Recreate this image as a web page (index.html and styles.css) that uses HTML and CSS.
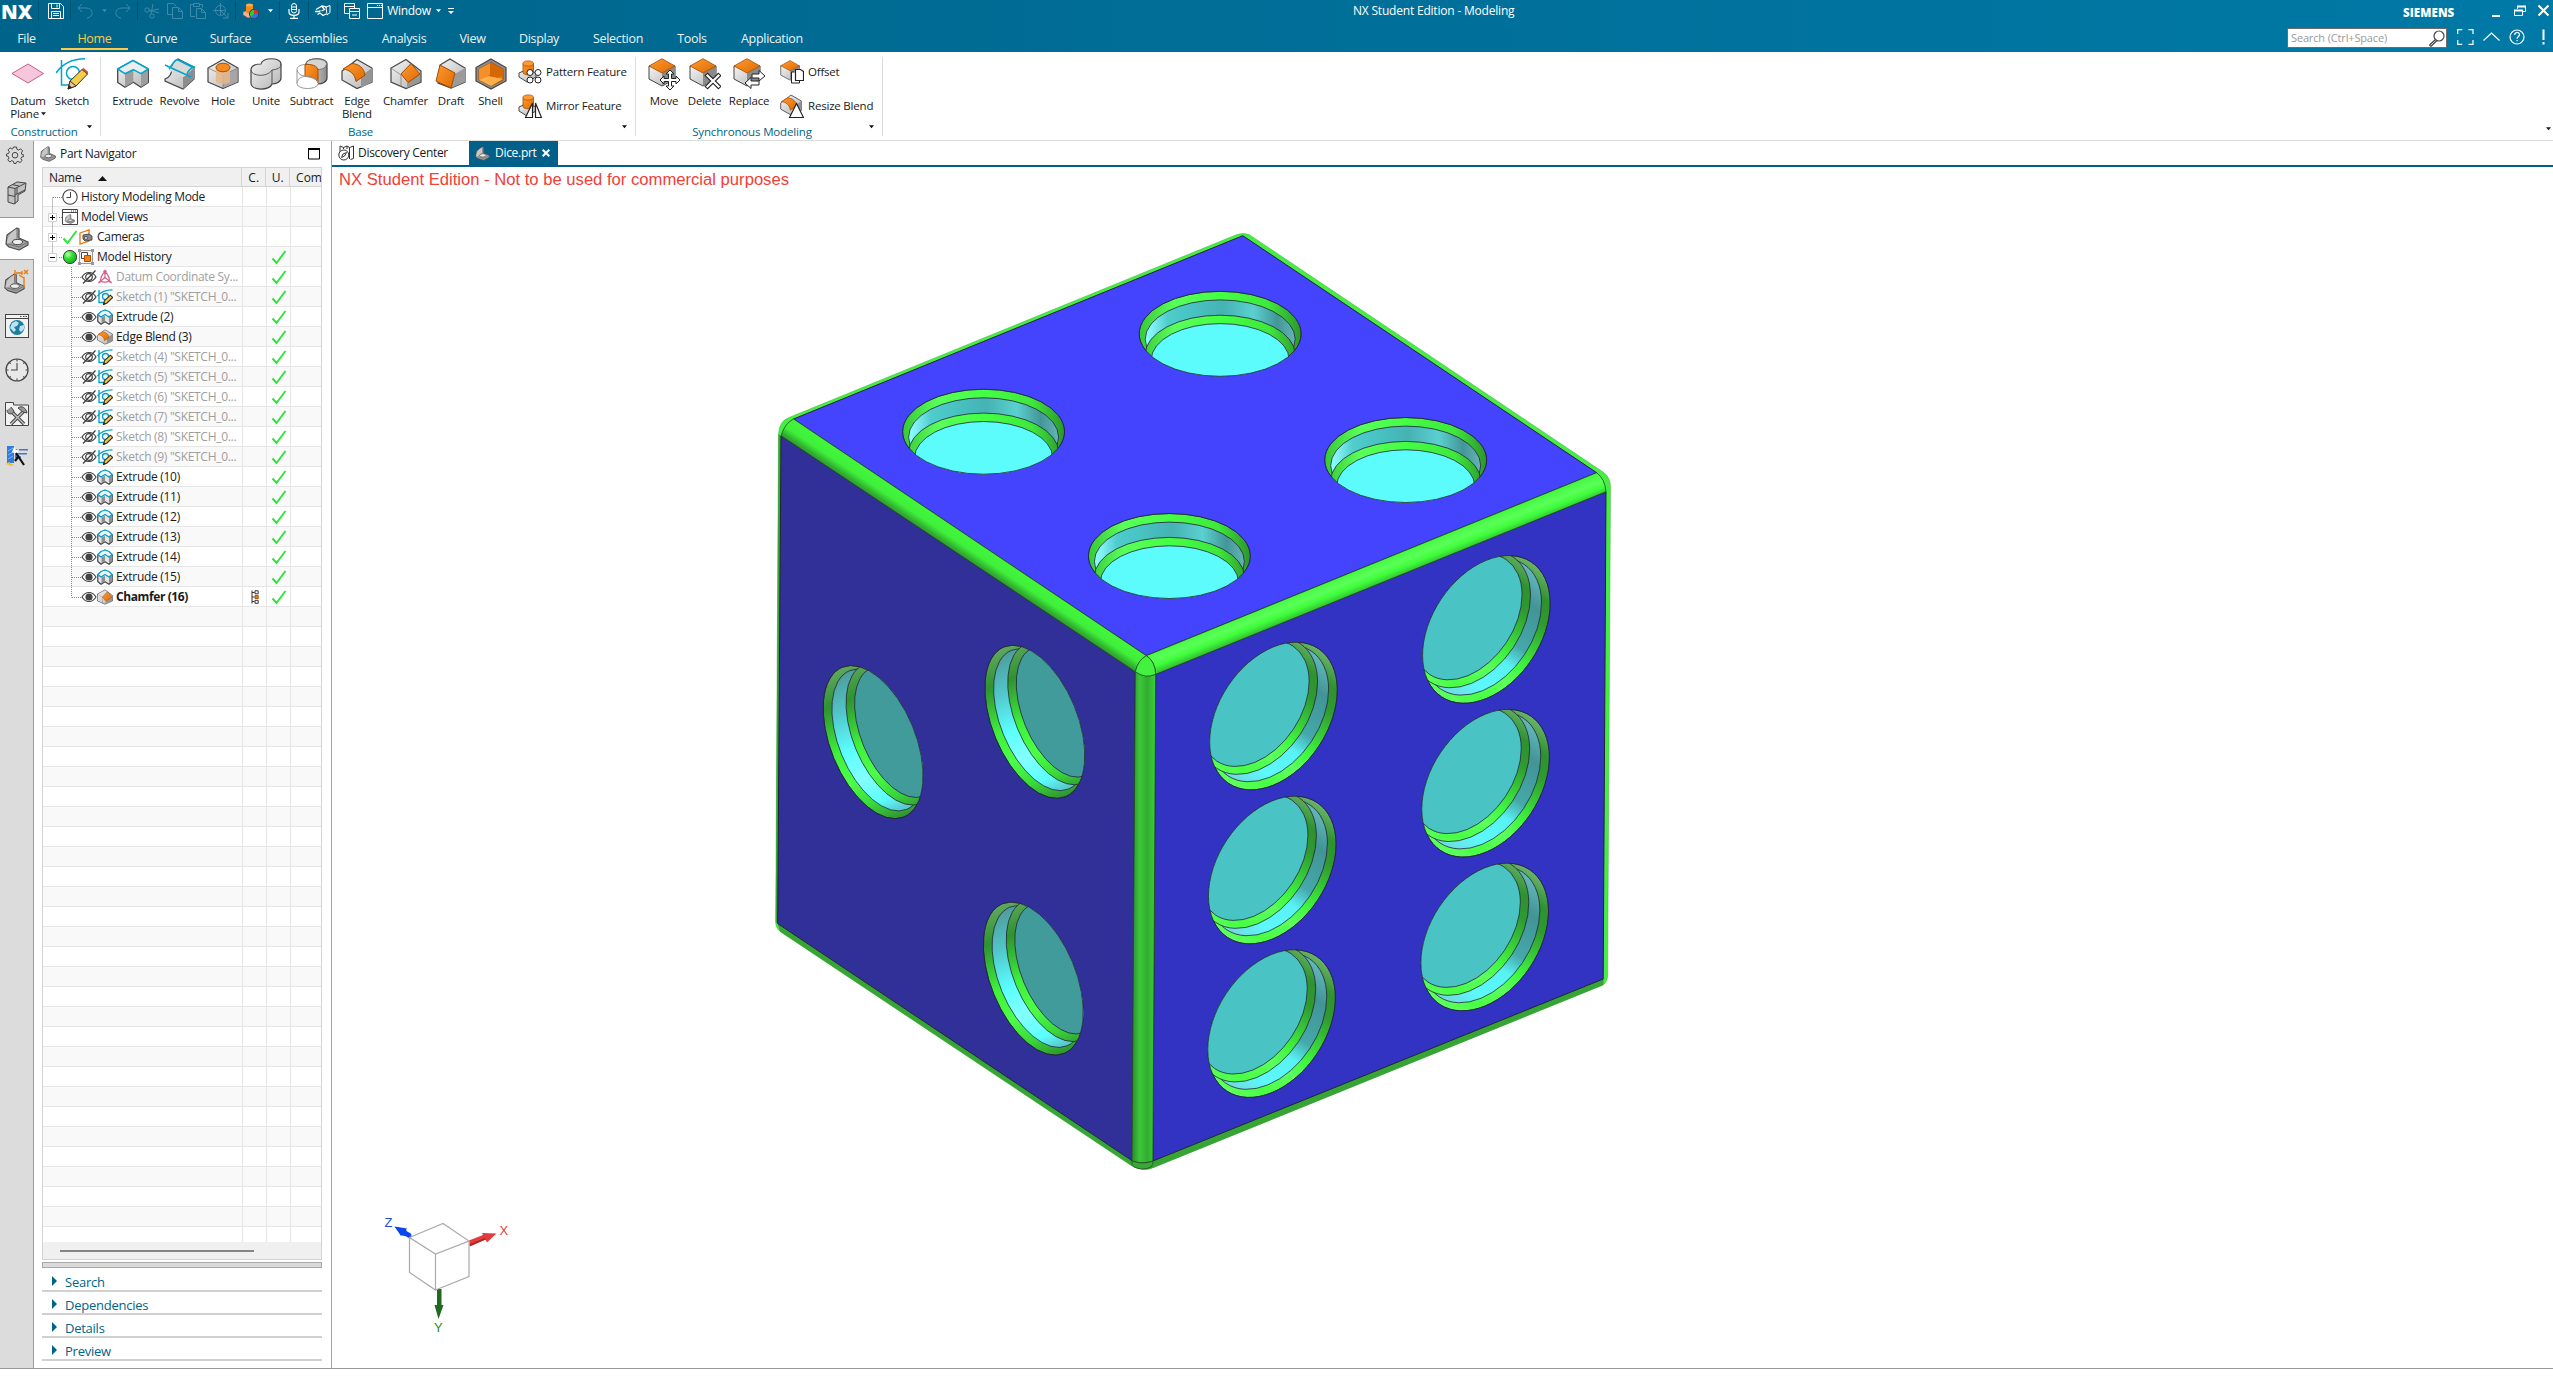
FILE: index.html
```html
<!DOCTYPE html>
<html lang="en">
<head>
<meta charset="utf-8">
<title>NX Student Edition - Modeling</title>
<link rel="stylesheet" href="styles.css">
</head>
<body>
<svg class="defs" width="0" height="0" aria-hidden="true">
  <defs>
    <linearGradient id="gGrey" x1="0" y1="0" x2="1" y2="1"><stop offset="0" stop-color="#f4f4f4"/><stop offset="1" stop-color="#b4b4b4"/></linearGradient>
    <linearGradient id="gDark" x1="0" y1="0" x2="1" y2="0"><stop offset="0" stop-color="#e6e6e6"/><stop offset="1" stop-color="#8c8c8c"/></linearGradient>
    <linearGradient id="gOr" x1="0" y1="0" x2="1" y2="1"><stop offset="0" stop-color="#ff9a30"/><stop offset="1" stop-color="#df6a00"/></linearGradient>
    <radialGradient id="gBall" cx=".35" cy=".3" r=".8"><stop offset="0" stop-color="#b8ffb0"/><stop offset=".4" stop-color="#35e235"/><stop offset="1" stop-color="#0fa01a"/></radialGradient>
    <symbol id="cube" viewBox="0 0 32 32"><path d="M16 1.500L31 10v14L16 30.500 1 24V10z" fill="url(#gGrey)" stroke="#444" stroke-width="1.200" stroke-linejoin="round"/><path d="M16 17v13l14.500-6V10z" fill="#a6a6a6"/><path d="M1 10l15 7 15-7M16 17v13" fill="none" stroke="#777" stroke-width=".7"/></symbol>
    <symbol id="extrude" viewBox="0 0 32 32"><path d="M.7 11v13.500L8 29.300l8.300-5 7.700 5 7.300-4.800V11L16 2.500z" fill="url(#gGrey)" stroke="#444" stroke-width="1.300" stroke-linejoin="round"/><path d="M8 16v13l8.300-5V12zM24 16v13l7-4.500V11z" fill="#9d9d9d"/><path d="M.7 11L16 2.500 31.300 11 24 15.700l-7.700-4-8.300 4z" fill="#ededed" stroke="#00a5cc" stroke-width="1.500" stroke-linejoin="round"/></symbol>
    <symbol id="extrude-s" viewBox="0 0 16 16"><path d="M.8 6v6.500L4 15.300l4-2.500 4 2.500 3.200-2.800V6L8 1.200z" fill="#e4e4e4" stroke="#444" stroke-width="1.200" stroke-linejoin="round"/><path d="M4.500 8.500v6L8 12V7zM12 8.500v6l2.700-2V6z" fill="#8f8f8f"/><path d="M.8 5.500l3.200-3L8 1l4 1.500 3.200 3L12 8 8 5.500 4 8z" fill="#f2f2f2" stroke="#00a0c8" stroke-width="1.300" stroke-linejoin="round"/></symbol>
    <symbol id="sketch" viewBox="0 0 32 32"><g fill="none" stroke="#00a5cc" stroke-width="1.500"><path d="M5.500 2v25h14M0 15C7 5 16 1 29 .8"/><circle cx="17" cy="15" r="6.500"/></g><path d="M12 31l2-8L26 11.500l5.500 4.500L20 28z" fill="#f5cd46" stroke="#333"/><path d="M26 11.500l1.500-1.300 5 4.500-1 1.300z" fill="#e04848" stroke="#a33" stroke-width=".6"/><path d="M12 31l2-8 6 5z" fill="#e9c79a" stroke="#333"/><path d="M12 31l1-4 3 2.400z" fill="#222"/></symbol>
    <symbol id="sketch-s" viewBox="0 0 16 16"><g fill="none" stroke="#00a0c8" stroke-width="1.300"><path d="M2 1v12.500h5M.5 7C4 2.500 9 .8 15.500.8"/><circle cx="8.500" cy="7.500" r="3"/></g><path d="M6.500 15.500l1-3.800 5.800-5.500 2.400 2.200-5.700 5.600z" fill="#f5c746" stroke="#2a2a2a" stroke-width="1.100"/><path d="M6.200 15.800l.7-2.600 2 1.800z" fill="#222"/></symbol>
    <symbol id="edgeblend" viewBox="0 0 32 32"><path d="M16 1.500L31 10v14L16 30.500 1 22v-9z" fill="url(#gGrey)" stroke="#444" stroke-width="1.200"/><path d="M20 30V18l11-8v14z" fill="#949494"/><path d="M5 9l9-5.500C21 4 26 8 27 15l-9 6.500C17 14 12 10 5 9z" transform="translate(-3 2)" fill="url(#gOr)" stroke="#a24b00"/></symbol>
    <symbol id="chamfer" viewBox="0 0 32 32"><path d="M16 1.500L31 13v11L16 30.500 1 24V10z" fill="url(#gGrey)" stroke="#444" stroke-width="1.200"/><path d="M17 25l13-9v8l-13 6z" fill="#979797"/><path d="M1 10l10 7v12" fill="none" stroke="#777" stroke-width=".7"/><path d="M21 5.500L30 16 18 24.500 11 16z" fill="url(#gOr)" stroke="#a24b00"/></symbol>
    <symbol id="offcube" viewBox="0 0 32 32"><path d="M1 8v13l13 7 13-7V8z" fill="url(#gGrey)" stroke="#444"/><path d="M14 15v12.500L26.500 21V8z" fill="#8a8a8a"/><path d="M14 .7L27 8l-13 7L1 8z" fill="url(#gOr)" stroke="#a24b00" stroke-width=".8"/></symbol>
    <symbol id="cylbase" viewBox="0 0 24 24"><path d="M1 13l9-4 8 4v4l-9 5-8-5z" fill="url(#gGrey)" stroke="#444"/><path d="M5 3.500v9c0 3 10.500 3 10.500 0v-9z" fill="url(#gOr)" stroke="#a24b00" stroke-width=".8"/><ellipse cx="10.200" cy="3.500" rx="5.200" ry="2.600" fill="#ff9a30" stroke="#a24b00" stroke-width=".7"/></symbol>
    <symbol id="part" viewBox="0 0 24 24"><path d="M1 17L2 8 12 1l2 1v9l9 4v3l-9 5-10-3z" fill="#a2a2a2" stroke="#4b4b4b" stroke-width="1.200" stroke-linejoin="round"/><path d="M2 15C3 8 7 4 12 2v9l-9 6z" fill="#c8c8c8"/><path d="M12 11v-9M23 15l-9 5-11-3" fill="none" stroke="#666" stroke-width=".8"/><ellipse cx="12.500" cy="15" rx="5" ry="2.600" fill="#eee" stroke="#444"/></symbol>
    <symbol id="eye" viewBox="0 0 16 16"><path d="M1 8c3.500-6 10.500-6 14 0-3.500 6-10.500 6-14 0z" fill="#fff" stroke="#444" stroke-width="1.100"/><circle cx="8" cy="8" r="3.600" fill="#444"/></symbol>
    <symbol id="noeye" viewBox="0 0 16 16"><g fill="none" stroke="#3c3c3c" stroke-width="1.200"><path d="M1 8c3.500-6 10.500-6 14 0-3.500 6-10.500 6-14 0zM14.500 1.500L2 14.500"/><circle cx="8" cy="8" r="3.300"/></g></symbol>
    <symbol id="check" viewBox="0 0 16 16"><path d="M1.500 9.500l4 4.500L14.500 2" fill="none" stroke="#2ee63a" stroke-width="2"/></symbol>
    <symbol id="clock" viewBox="0 0 24 24"><circle cx="12" cy="12" r="11" fill="#fff" fill-opacity=".35" stroke="#444" stroke-width="1.200"/><path d="M12 5v7H6M12 1v2.500M12 20.500V23M1 12h2.500M20.500 12H23M4.500 4.500l1.200 1.200M19.500 4.500l-1.200 1.200M4.500 19.500l1.200-1.200M19.500 19.500l-1.200-1.200" fill="none" stroke="#444" stroke-width="1.100"/></symbol>
    <symbol id="clock-s" viewBox="0 0 16 16"><circle cx="8" cy="8" r="7.200" fill="#fff" stroke="#444" stroke-width="1.100"/><path d="M8.500 3v5.500H4.500" fill="none" stroke="#444"/></symbol>
    <symbol id="datum" viewBox="0 0 16 16"><g fill="none" stroke="#d8608c" stroke-width="1.200"><path d="M8 2v6.500M8 8.500L2.500 13M8 8.500l5.500 4.500M8 2.500c-3 3-4.500 6-4.500 9.500 3 1.500 6 1.500 9 0 0-3.500-1.500-6.500-4.500-9.500z"/></g><circle cx="8" cy="2.300" r="1.600" fill="#d8608c"/><path d="M1 14.500l1-3 2 2zM15 14.500l-1-3-2 2z" fill="#d8608c"/></symbol>
    <symbol id="caret" viewBox="0 0 6 4"><path d="M0 0h6L3 3.500z" fill="currentColor"/></symbol>
  </defs>
</svg>

<div class="app">
  <header class="top">
    <div class="titlebar">
      <div class="quick">
        <span class="nx">NX</span>
        <span class="q q-save sep"><svg width="16" height="16" viewBox="0 0 16 16"><path d="M.5.500h12l3 3v12H.5zM3.500.500v5h8v-5M9 1.500v3M3.500 15.500v-7h9v7M5 10.500h6M5 12.500h6" fill="none" stroke="#fff"/></svg></span>
        <span class="q q-undo sep dim"><svg width="16" height="16" viewBox="0 0 16 16"><path d="M5 1L1 5l4 4M1 5h8c8 0 8 9 1 10" fill="none" stroke="currentColor"/></svg></span>
        <span class="q q-c1 dim"><svg width="5" height="4"><use href="#caret"/></svg></span>
        <span class="q q-redo dim"><svg width="16" height="16" viewBox="0 0 16 16"><path d="M11 1l4 4-4 4M15 5H7C-1 5-1 14 6 15" fill="none" stroke="currentColor"/></svg></span>
        <span class="q q-cut sep dim"><svg width="16" height="16" viewBox="0 0 16 16"><g fill="none" stroke="currentColor"><circle cx="3" cy="7" r="2.200"/><circle cx="8" cy="13" r="2.200"/><path d="M5 8l10-2M7 11L9 1M5 7l10 3"/></g></svg></span>
        <span class="q q-copy dim"><svg width="16" height="16" viewBox="0 0 16 16"><path d="M5 11.500H.5v-11h6l3 3M5.500 4.500h6l4 4v7h-10zM11.500 4.500v4h4" fill="none" stroke="currentColor"/></svg></span>
        <span class="q q-paste dim"><svg width="16" height="16" viewBox="0 0 16 16"><path d="M5 13.500H.5v-12h3m6 0h3v3M3.500.500h6v3h-6zM6.500 5.500h5l4 4v6h-9zM11.500 5.500v4h4" fill="none" stroke="currentColor"/></svg></span>
        <span class="q q-target dim"><svg width="16" height="16" viewBox="0 0 16 16"><circle cx="7.500" cy="7.500" r="5" fill="none" stroke="currentColor"/><path d="M7.500 0v12M0 7.500h12M8 8l7 7m0-5v5h-5" fill="none" stroke="currentColor"/></svg></span>
        <span class="q q-color sep"><svg width="16" height="16" viewBox="0 0 16 16"><path d="M0 9l5-2 6 2-1 5-5 1-5-3z" fill="#f0b0a0" stroke="#a33" stroke-width=".6"/><path d="M3 2v7c0 2 7 2 7 0V2z" fill="#f38a1c"/><ellipse cx="6.500" cy="2" rx="3.500" ry="1.600" fill="#ffab4a"/><circle cx="11" cy="11" r="4.600" fill="#2ad02a" stroke="#333"/><path d="M11 11V6.500A4.500 4.500 0 0 1 15.500 11z" fill="#e82c2c"/><path d="M11 11h4.500A4.500 4.500 0 0 1 8 14.200z" fill="#2c74e8"/></svg></span>
        <span class="q q-c2"><svg width="5" height="4"><use href="#caret"/></svg></span>
        <span class="q q-mic sep"><svg width="12" height="16" viewBox="0 0 12 16"><rect x="3.500" y=".5" width="5" height="9.500" rx="2.500" fill="none" stroke="#fff"/><path d="M4 4h4M4 6.500h4M1 6v3c0 4.500 10 4.500 10 0V6M6 12.500V15M2 15.300h8" fill="none" stroke="#fff" stroke-width="1.200"/></svg></span>
        <span class="q q-hand sep"><svg width="16" height="12" viewBox="0 0 16 12"><path d="M1 4.500L7 1l3 .5 1.500 1M7 1.500l2.500 3-3 1.500M0 6.500h4l1.500-1M2.500 9.500L5 8l3 2.500 3-1.500" fill="none" stroke="#fff" stroke-width="1.300"/><path d="M11 2l4-1.500v7L12 10z" fill="none" stroke="#fff"/></svg></span>
        <span class="q q-wins sep"><svg width="16" height="16" viewBox="0 0 16 16"><path d="M5 10.500H.5V.500h10V5M.5 3.500h10M5.500 5.500h10v10h-10zM5.500 8.500h10M8 12h5" fill="none" stroke="#fff"/></svg></span>
        <span class="q q-win"><svg width="16" height="16" viewBox="0 0 16 16"><path d="M.5.500h15v15H.5zM.5 4.500h15M10 2.500h1m1 0h1m1 0h1" fill="none" stroke="#fff"/></svg></span>
        <span class="q q-text">Window</span>
        <span class="q q-c3"><svg width="5" height="4"><use href="#caret"/></svg></span>
        <span class="q q-more"><svg width="6" height="7" viewBox="0 0 6 7"><path d="M0 .500h6" stroke="#fff"/><path d="M0 3h6L3 6z" fill="#fff"/></svg></span>
      </div>
      <h1 class="title">NX Student Edition - Modeling</h1>
      <div class="winctl">
        <span class="brand">SIEMENS</span>
        <svg width="60" height="14" viewBox="0 0 60 14"><g fill="none" stroke="#fff"><path d="M1 12h8" stroke-width="2"/><path d="M26.500 5V2.500h8v5H32M23.500 6.500h8v5h-8z"/><path d="M23 6.500h9M26 2.500h9" stroke-width="2"/><path d="M47.500 1.500l10 10m0-10l-10 10" stroke-width="2"/></g></svg>
      </div>
    </div>
    <div class="menubar">
      <nav class="tabs">
        <a class="tab t-file">File</a><a class="tab t-home active">Home</a><a class="tab t-curve">Curve</a><a class="tab t-surface">Surface</a><a class="tab t-asm">Assemblies</a><a class="tab t-ana">Analysis</a><a class="tab t-view">View</a><a class="tab t-disp">Display</a><a class="tab t-sel">Selection</a><a class="tab t-tools">Tools</a><a class="tab t-app">Application</a>
      </nav>
      <div class="tools">
        <div class="search"><span>Search (Ctrl+Space)</span><svg width="17" height="17" viewBox="0 0 17 17"><circle cx="11" cy="6" r="5" fill="#fff" stroke="#444" stroke-width="1.200"/><path d="M7.500 9.500l-6 5.500M9 10.500L3 16.200l-1.700-1" fill="none" stroke="#444" stroke-width="1.200"/></svg></div>
        <svg width="90" height="18" viewBox="0 0 90 18"><g fill="none" stroke="#fff" stroke-width="1.200"><path d="M.7 6V1.700h4.500M11.500 1.700H16V6M16 12v4.300h-4.500M5.200 16.300H.7V12"/><path d="M26.500 12.500L34.500 5l8 7.500"/><circle cx="60" cy="9" r="7"/><path d="M57.700 7c0-3.300 4.800-3.300 4.800-.3 0 1.800-2.400 1.800-2.400 4M60.100 12v1.300"/><path d="M86.500 1.500v10.500M86.500 14v2.500" stroke-width="2"/></g></svg>
      </div>
    </div>
  </header>

  <section class="ribbon">
    <div class="group g1">
      <div class="items">
        <div class="big w44"><svg width="32" height="32" viewBox="0 0 32 32"><path d="M0 15.500L16 6l15.500 9.500L16 25z" fill="#f5c6dc" stroke="#c75d8b"/></svg><span>Datum<br>Plane <svg class="car" width="5" height="4"><use href="#caret"/></svg></span></div>
        <div class="big w44"><svg width="32" height="32"><use href="#sketch"/></svg><span>Sketch</span></div>
      </div>
      <div class="gname"><span>Construction</span><svg class="dd" width="5" height="4"><use href="#caret"/></svg></div>
    </div>
    <div class="group g2">
      <div class="items">
        <div class="big w47"><svg width="32" height="32"><use href="#extrude"/></svg><span>Extrude</span></div>
        <div class="big w47"><svg width="32" height="32" viewBox="0 0 32 32"><path d="M1 21c5-2 7-5 7-13l6-7 16 8v12L19 31 1 23z" fill="url(#gGrey)" stroke="#444" stroke-width="1.200"/><path d="M19 19c3-1 6-5 11-9v11L19 31z" fill="#8e8e8e"/><path d="M13 1.500L30 9c-5 3-4 7-11 10L4 12c4-1 5-7 9-10.500z" fill="#d9d9d9"/><path d="M13 1.500L30 9c-4 1.500-6 4-7 7M13 1.500C9 3 8 8 5 11M1 7l26 12M13 1.500l15 7.500" fill="none" stroke="#00a5cc" stroke-width="1.500"/></svg><span>Revolve</span></div>
        <div class="big w40"><svg width="32" height="32"><use href="#cube"/><path d="M9 9v14c0 4 14 4 14 0V9z" fill="#e8b689" fill-opacity=".85"/><ellipse cx="16" cy="9.500" rx="7" ry="4.300" fill="#f58a1f" stroke="#a24b00"/></svg><span>Hole</span></div>
        <div class="big w46"><svg width="32" height="32" viewBox="0 0 32 32"><path d="M1 12c0-5 6-6 10-6 1-7 20-7 20 0v14c0 4-5 6-9 6-2 7-21 7-21-1z" fill="url(#gGrey)" stroke="#444" stroke-width="1.200"/><path d="M1 12c0 6 16 8 21 0 5-.5 9-2 9-6M22 12v14" fill="none" stroke="#555"/></svg><span>Unite</span></div>
        <div class="big w45"><svg width="32" height="32" viewBox="0 0 32 32"><path d="M10 6c1-7 21-7 21 0v14c0 4-5 6-9 6z" fill="url(#gDark)" stroke="#444" stroke-width="1.200"/><path d="M10 5.500c1-6 20-6 20.500 0 0 4-4 6-8.500 6z" fill="#d4d4d4" stroke="#666" stroke-width=".8"/><path d="M1 12v14c1 6 20 6 21 0 0-4-3-7-13-7.500V6.500C3 7 1 9 1 12z" fill="#fff"/><path d="M9 6.500c6-.5 13 1 13 6v12c-3-5-8-6-13-6z" fill="url(#gOr)" stroke="#a24b00"/><path d="M9 6.500C3 7 1 9 1 12v14c1 6 20 6 21 0M1 12c2 6 6 5.500 8 6M1 25c1-5 5-6.500 8-6.500 6 0 12 2 13 6" fill="none" stroke="#999"/></svg><span>Subtract</span></div>
        <div class="big w46"><svg width="32" height="32"><use href="#edgeblend"/></svg><span>Edge<br>Blend</span></div>
        <div class="big w51"><svg width="32" height="32"><use href="#chamfer"/></svg><span>Chamfer</span></div>
        <div class="big w40"><svg width="32" height="32" viewBox="0 0 32 32"><path d="M15 1l15 9v14l-14 6L3 25 5 7z" fill="url(#gGrey)" stroke="#444" stroke-width="1.200"/><path d="M20 16l10-6v14l-14 6z" fill="#9b9b9b"/><path d="M5 7l15 8-4 15L1 23z" fill="url(#gOr)" stroke="#a24b00"/></svg><span>Draft</span></div>
        <div class="big w39"><svg width="32" height="32" viewBox="0 0 32 32"><path d="M16 1l15 8.500V23l-15 8L1 23V9.500z" fill="#8d8d8d" stroke="#444" stroke-width="1.200"/><path d="M16 4.500L28 11v11l-12 6-12-6V11z" fill="#ef7d14" stroke="#a24b00"/><path d="M16 4.500L28 11v7c-6 1-7 4-12 5-5-2-4-4-4-10z" fill="#d56705"/><path d="M4 22l9-4 15 3-12 7z" fill="#ffb04a"/><path d="M4 11l11-6v12L4 22z" fill="#f58f28"/></svg><span>Shell</span></div>
        <div class="small">
          <div class="row"><svg width="24" height="24"><use href="#cylbase"/><g fill="#fff" stroke="#222"><circle cx="12" cy="12.500" r="3"/><circle cx="20" cy="12.500" r="3"/><circle cx="12" cy="20" r="3"/><circle cx="20" cy="20" r="3"/></g></svg><span>Pattern Feature</span></div>
          <div class="row"><svg width="24" height="24"><use href="#cylbase"/><path d="M14.500 9v14.500h-7zM17.500 9v14.500h6z" fill="#fff" stroke="#222" stroke-width="1.200"/></svg><span>Mirror Feature</span></div>
        </div>
      </div>
      <div class="gname"><span>Base</span><svg class="dd" width="5" height="4"><use href="#caret"/></svg></div>
    </div>
    <div class="group g3">
      <div class="items">
        <div class="big w44"><svg width="32" height="32"><use href="#offcube"/><path d="M22 12l4 4h-2.500v4.500H28V18l4 4-4 4v-2.500h-4.500V28H26l-4 4-4-4h2.500v-4.500H16V26l-4-4 4-4v2.500h4.500V16H18z" fill="#fff" stroke="#222"/></svg><span>Move</span></div>
        <div class="big w37"><svg width="32" height="32"><use href="#offcube"/><path d="M17 16l14 14m0-14L17 30" stroke="#222" stroke-width="4.500"/><path d="M17.700 16.700l12.600 12.600m0-12.600L17.700 29.300" stroke="#fff" stroke-width="2.200"/></svg><span>Delete</span></div>
        <div class="big w52"><svg width="32" height="32"><use href="#offcube"/><path d="M19 16h7v-3.500l6 5.500-6 5v-3h-7zM26 23h-8v-3.500L12 25l6 5.500V27h8z" fill="#fff" stroke="#222"/></svg><span>Replace</span></div>
        <div class="small">
          <div class="row"><svg width="24" height="24"><svg width="23" height="23" viewBox="0 0 32 32"><use href="#offcube"/></svg><path d="M14 12h-2.500v11h8v-3" fill="#fff" stroke="#222"/><path d="M15.500 9.500h5l3 2v9h-8z" fill="#fff" stroke="#222" stroke-width="1.200"/></svg><span>Offset</span></div>
          <div class="row"><svg width="24" height="24"><svg width="22" height="22" viewBox="0 0 32 32"><use href="#edgeblend"/></svg><path d="M16.500 9.500l7 14h-14z" fill="#fff" stroke="#222" stroke-width="1.200"/></svg><span>Resize Blend</span></div>
        </div>
      </div>
      <div class="gname"><span>Synchronous Modeling</span><svg class="dd" width="5" height="4"><use href="#caret"/></svg></div>
    </div>
    <svg class="ribmore" width="5" height="4"><use href="#caret"/></svg>
  </section>

  <main class="main">
    <aside class="rail">
      <div class="ri r1"><svg width="18" height="18" viewBox="0 0 18 18"><path d="M7.500 1h3l.4 2.300 1.700.8 2-1.300 2 2.100-1.300 2 .7 1.700L18 9l-.2 1.500-2.100.5-.8 1.700 1.200 1.900-2.100 2-1.900-1.200-1.700.7L10 17.500H8l-.6-2.200-1.700-.7L3.800 16l-2-2.100L3 12l-.8-1.700L.5 10V8l2-.5.8-1.700-1.200-2 2-2 1.900 1.300 1-.6z" fill="none" stroke="#444"/><circle cx="9" cy="9.200" r="2.800" fill="none" stroke="#444"/></svg></div>
      <div class="ri r2"><svg width="20" height="24" viewBox="0 0 20 24"><g stroke="#444" fill="#c2c2c2"><path d="M1 6l9-5 9 1-1 8-7 4v6l-4 3-6-2z"/><path d="M1 6l7 1.500V23M8 7.500L18 2.500M8 14l10-5M1 14l7 1.500M10 7v6M5 3.500l7 1.500" fill="none"/></g></svg></div>
      <div class="ri on"><svg width="24" height="24"><use href="#part"/></svg></div>
      <div class="ri r4"><svg width="26" height="26"><svg y="3" width="21" height="23" viewBox="0 0 24 24"><use href="#part"/></svg><path d="M11 1v7M12 4h6M18 2v4M20 1l4 4m0-4l-4 4M20 8v11M15 6l5 3" fill="none" stroke="#e8770c" stroke-width="1.300"/></svg></div>
      <div class="ri"><svg width="24" height="24" viewBox="0 0 24 24"><rect x=".5" y=".5" width="23" height="23" fill="#f2f2f2" stroke="#444"/><path d="M.5 4.500h23M15 2.500h1.500m1.500 0h1.500m1 0H22" stroke="#444"/><circle cx="12" cy="13.500" r="7.500" fill="#1c7ea0"/><path d="M7 9l4-2 3 2-2 3-3 1 2 3-2 2-4-4zM15 12l4-1v4l-3 3-2-2z" fill="#bfe3ee"/></svg></div>
      <div class="ri"><svg width="24" height="24"><use href="#clock"/></svg></div>
      <div class="ri r7"><svg width="24" height="24" viewBox="0 0 24 24"><path d="M.5 3V.500h8V3h15v20.500H.5z" fill="#f2f2f2" stroke="#444"/><path d="M4 7l15 15M20 8L6 22" stroke="#444" stroke-width="3.400"/><path d="M4 7l15 15M18 10L6 22" stroke="#c2c2c2" stroke-width="1.400"/><path d="M2 8c0 5 6 5 7 1L6 5M13 6c4-3 8 0 9 5l-4-1z" fill="#999" stroke="#444"/></svg></div>
      <div class="ri r8"><svg width="24" height="24" viewBox="0 0 24 24"><path d="M2 1h7v17H2z" fill="#2f7be0"/><path d="M3 6l5-3M3 10l5-3M3 14l5-3" stroke="#7db8ff"/><path d="M9 4h14v1.500H11zM10 8h12v1.500H12l4 2v1.500h-6" fill="#4a74c8"/><path d="M1 19l3-2 5 3-3 1z" fill="#f0c030"/><path d="M9 2l2 3 3-1-1 4-2 1-4-2z" fill="#fff"/><path d="M11 8l8 12M10 16l3-4" stroke="#111" stroke-width="2.200"/></svg></div>
    </aside>

    <aside class="panel">
      <div class="phead"><svg width="16" height="16"><use href="#part"/></svg><span>Part Navigator</span><svg class="max" width="12" height="12" viewBox="0 0 12 12"><path d="M.5 1h11v10H.5z" fill="none" stroke="#000"/><path d="M0 1h12" stroke="#000" stroke-width="2"/></svg></div>
      <div class="grid">
        <div class="hrow"><span class="cn">Name<svg width="9" height="5" viewBox="0 0 9 5"><path d="M0 5h9L4.500 0z" fill="#111"/></svg></span><span class="cc">C.</span><span class="cu">U.</span><span class="cm">Com</span></div>
        <div class="rows">
          <svg class="guides" width="60" height="420" viewBox="0 0 60 420"><path d="M9.500 10.500V70M10 10.500h9M16 30.500h3M16 50.500h3M16 70.500h3M28.500 80v330.500M29 90.500h9M29 110.500h9M29 130.500h9M29 150.500h9M29 170.500h9M29 190.500h9M29 210.500h9M29 230.500h9M29 250.500h9M29 270.500h9M29 290.500h9M29 310.500h9M29 330.500h9M29 350.500h9M29 370.500h9M29 390.500h9M29 410.500h9" fill="none" stroke="#888" stroke-dasharray="1 1"/><g fill="#fff" stroke="#d0d0d0"><path d="M5.500 26.500h8v8h-8zM5.500 46.500h8v8h-8zM5.500 66.500h8v8h-8z"/></g><path d="M7 30.500h5M9.500 28v5M7 50.500h5M9.500 48v5M7 70.500h5" stroke="#000"/></svg>
          <div class="trow l1"><span class="cn"><svg width="16" height="16"><use href="#clock-s"/></svg><b>History Modeling Mode</b></span></div>
          <div class="trow l1"><span class="cn"><svg width="16" height="16" viewBox="0 0 16 16"><path d="M.5.500h15v15H.5zM.5 3.500h15M9 2h1m1 0h1m1 0h1" fill="#fff" stroke="#444"/><svg x="3" y="5" width="10" height="10"><use href="#part"/></svg></svg><b>Model Views</b></span></div>
          <div class="trow l1"><span class="cn"><svg width="16" height="16"><use href="#check"/></svg><svg width="16" height="16" viewBox="0 0 16 16"><path d="M2 4l9-3v11l-9 3z" fill="none" stroke="#e8770c" stroke-width="1.300"/><path d="M5 6l6-1 3 2v4l-7 1-2-2z" fill="#888" stroke="#333" stroke-width=".8"/><circle cx="8" cy="9" r="1.600" fill="#ddd" stroke="#333" stroke-width=".7"/></svg><b>Cameras</b></span></div>
          <div class="trow l1"><span class="cn"><svg width="16" height="16"><circle cx="8" cy="8" r="6.600" fill="url(#gBall)" stroke="#444"/></svg><svg width="16" height="16" viewBox="0 0 16 16"><path d="M1.500 1.500h13v13h-13z" fill="#f4f4f4" stroke="#999"/><path d="M0 0h3v3H0zM13 0h3v3h-3zM0 13h3v3H0zM13 13h3v3h-3z" fill="#999"/><path d="M3.500 3.500h6v6h-6z" fill="#fff" stroke="#444"/><path d="M6.500 6.500h6v6h-6z" fill="#f08010" stroke="#b05000"/></svg><b>Model History</b></span><span class="cc"></span><span class="cu"><svg width="16" height="16"><use href="#check"/></svg></span></div>
          <div class="trow l2 off"><span class="cn"><svg width="16" height="16"><use href="#noeye"/></svg><svg width="16" height="16"><use href="#datum"/></svg><b>Datum Coordinate Sy...</b></span><span class="cc"></span><span class="cu"><svg width="16" height="16"><use href="#check"/></svg></span></div>
          <div class="trow l2 off"><span class="cn"><svg width="16" height="16"><use href="#noeye"/></svg><svg width="16" height="16"><use href="#sketch-s"/></svg><b>Sketch (1) "SKETCH_0...</b></span><span class="cc"></span><span class="cu"><svg width="16" height="16"><use href="#check"/></svg></span></div>
          <div class="trow l2"><span class="cn"><svg width="16" height="16"><use href="#eye"/></svg><svg width="16" height="16"><use href="#extrude-s"/></svg><b>Extrude (2)</b></span><span class="cc"></span><span class="cu"><svg width="16" height="16"><use href="#check"/></svg></span></div>
          <div class="trow l2"><span class="cn"><svg width="16" height="16"><use href="#eye"/></svg><svg width="16" height="16"><use href="#edgeblend"/></svg><b>Edge Blend (3)</b></span><span class="cc"></span><span class="cu"><svg width="16" height="16"><use href="#check"/></svg></span></div>
          <div class="trow l2 off"><span class="cn"><svg width="16" height="16"><use href="#noeye"/></svg><svg width="16" height="16"><use href="#sketch-s"/></svg><b>Sketch (4) "SKETCH_0...</b></span><span class="cc"></span><span class="cu"><svg width="16" height="16"><use href="#check"/></svg></span></div>
          <div class="trow l2 off"><span class="cn"><svg width="16" height="16"><use href="#noeye"/></svg><svg width="16" height="16"><use href="#sketch-s"/></svg><b>Sketch (5) "SKETCH_0...</b></span><span class="cc"></span><span class="cu"><svg width="16" height="16"><use href="#check"/></svg></span></div>
          <div class="trow l2 off"><span class="cn"><svg width="16" height="16"><use href="#noeye"/></svg><svg width="16" height="16"><use href="#sketch-s"/></svg><b>Sketch (6) "SKETCH_0...</b></span><span class="cc"></span><span class="cu"><svg width="16" height="16"><use href="#check"/></svg></span></div>
          <div class="trow l2 off"><span class="cn"><svg width="16" height="16"><use href="#noeye"/></svg><svg width="16" height="16"><use href="#sketch-s"/></svg><b>Sketch (7) "SKETCH_0...</b></span><span class="cc"></span><span class="cu"><svg width="16" height="16"><use href="#check"/></svg></span></div>
          <div class="trow l2 off"><span class="cn"><svg width="16" height="16"><use href="#noeye"/></svg><svg width="16" height="16"><use href="#sketch-s"/></svg><b>Sketch (8) "SKETCH_0...</b></span><span class="cc"></span><span class="cu"><svg width="16" height="16"><use href="#check"/></svg></span></div>
          <div class="trow l2 off"><span class="cn"><svg width="16" height="16"><use href="#noeye"/></svg><svg width="16" height="16"><use href="#sketch-s"/></svg><b>Sketch (9) "SKETCH_0...</b></span><span class="cc"></span><span class="cu"><svg width="16" height="16"><use href="#check"/></svg></span></div>
          <div class="trow l2"><span class="cn"><svg width="16" height="16"><use href="#eye"/></svg><svg width="16" height="16"><use href="#extrude-s"/></svg><b>Extrude (10)</b></span><span class="cc"></span><span class="cu"><svg width="16" height="16"><use href="#check"/></svg></span></div>
          <div class="trow l2"><span class="cn"><svg width="16" height="16"><use href="#eye"/></svg><svg width="16" height="16"><use href="#extrude-s"/></svg><b>Extrude (11)</b></span><span class="cc"></span><span class="cu"><svg width="16" height="16"><use href="#check"/></svg></span></div>
          <div class="trow l2"><span class="cn"><svg width="16" height="16"><use href="#eye"/></svg><svg width="16" height="16"><use href="#extrude-s"/></svg><b>Extrude (12)</b></span><span class="cc"></span><span class="cu"><svg width="16" height="16"><use href="#check"/></svg></span></div>
          <div class="trow l2"><span class="cn"><svg width="16" height="16"><use href="#eye"/></svg><svg width="16" height="16"><use href="#extrude-s"/></svg><b>Extrude (13)</b></span><span class="cc"></span><span class="cu"><svg width="16" height="16"><use href="#check"/></svg></span></div>
          <div class="trow l2"><span class="cn"><svg width="16" height="16"><use href="#eye"/></svg><svg width="16" height="16"><use href="#extrude-s"/></svg><b>Extrude (14)</b></span><span class="cc"></span><span class="cu"><svg width="16" height="16"><use href="#check"/></svg></span></div>
          <div class="trow l2"><span class="cn"><svg width="16" height="16"><use href="#eye"/></svg><svg width="16" height="16"><use href="#extrude-s"/></svg><b>Extrude (15)</b></span><span class="cc"></span><span class="cu"><svg width="16" height="16"><use href="#check"/></svg></span></div>
          <div class="trow l2 cur"><span class="cn"><svg width="16" height="16"><use href="#eye"/></svg><svg width="16" height="16"><use href="#chamfer"/></svg><b>Chamfer (16)</b></span><span class="cc"><svg width="8" height="14" viewBox="0 0 8 14"><path d="M1 .500v13M1 2.500h2.500M1 7h2.500M1 11.500h2.500" stroke="#333"/><path d="M4 .800h3.200v3H4zM4 10.300h3.200v3H4z" fill="#fff" stroke="#333"/><path d="M4 5.500h3.200v3H4z" fill="#f08010" stroke="#b05000"/></svg></span><span class="cu"><svg width="16" height="16"><use href="#check"/></svg></span></div>
        </div>
        <div class="hscroll"><i></i></div>
      </div>
      <div class="splitter"></div>
      <div class="acc"><i></i><span>Search</span></div>
      <div class="acc"><i></i><span>Dependencies</span></div>
      <div class="acc"><i></i><span>Details</span></div>
      <div class="acc"><i></i><span>Preview</span></div>
    </aside>

    <section class="doc">
      <div class="dtabs">
        <div class="dtab d1"><svg width="17" height="16" viewBox="0 0 17 16"><path d="M2 7V1l3.500 1.500L9 1l2.500 1.500L15.500 1v12.500l-3 1M11.500 2.500V14M5.500 2.500V4M9 1v3" fill="none" stroke="#333"/><circle cx="5.800" cy="10" r="5" fill="#fff" stroke="#333"/><path d="M8.500 7.500L6.500 11 3.500 12.500 5 9z" fill="none" stroke="#333"/></svg><span>Discovery Center</span></div>
        <div class="dtab d2"><svg width="15" height="15"><use href="#part"/></svg><span>Dice.prt</span><svg width="8" height="8" viewBox="0 0 8 8"><path d="M.7.700l6.600 6.600m0-6.600L.7 7.300" stroke="#fff" stroke-width="2"/></svg></div>
      </div>
      <svg class="view" width="2221" height="1200" viewBox="332 167 2221 1200">
        <defs>
          <linearGradient id="tg" gradientUnits="userSpaceOnUse" x1="-81" x2="81" y1="0" y2="0"><stop offset="0" stop-color="#38c838"/><stop offset=".22" stop-color="#5aff5a"/><stop offset=".5" stop-color="#44ff44"/><stop offset=".8" stop-color="#3fe83c"/><stop offset="1" stop-color="#2c952c"/></linearGradient>
          <linearGradient id="tw" gradientUnits="userSpaceOnUse" x1="-75" x2="75" y1="0" y2="0"><stop offset="0" stop-color="#8cffff"/><stop offset=".05" stop-color="#80f0f4"/><stop offset=".15" stop-color="#4fcccc"/><stop offset=".3" stop-color="#49c3c3"/><stop offset=".52" stop-color="#46b2b4"/><stop offset=".72" stop-color="#5bd0d0"/><stop offset=".88" stop-color="#439698"/><stop offset="1" stop-color="#66b4b8"/></linearGradient>
          <linearGradient id="rg" gradientUnits="userSpaceOnUse" x1="0" x2="0" y1="-81" y2="81"><stop offset="0" stop-color="#60ff60"/><stop offset=".12" stop-color="#48ff44"/><stop offset=".3" stop-color="#5cff5c"/><stop offset=".42" stop-color="#40f840"/><stop offset=".72" stop-color="#2f9a2f"/><stop offset=".85" stop-color="#2f912f"/><stop offset="1" stop-color="#6ab46a"/></linearGradient>
          <linearGradient id="rw" gradientUnits="userSpaceOnUse" x1="0" x2="0" y1="-75" y2="75"><stop offset="0" stop-color="#72d8e0"/><stop offset=".15" stop-color="#5cf8fc"/><stop offset=".38" stop-color="#58f2f4"/><stop offset=".52" stop-color="#45a8aa"/><stop offset=".8" stop-color="#429496"/><stop offset="1" stop-color="#64b8bc"/></linearGradient>
          <linearGradient id="lg" gradientUnits="userSpaceOnUse" x1="0" x2="0" y1="-81" y2="81"><stop offset="0" stop-color="#60a860"/><stop offset=".2" stop-color="#2f922f"/><stop offset=".48" stop-color="#40f03c"/><stop offset=".68" stop-color="#4cff48"/><stop offset=".85" stop-color="#3ad83a"/><stop offset="1" stop-color="#2f922f"/></linearGradient>
          <linearGradient id="lw" gradientUnits="userSpaceOnUse" x1="0" x2="0" y1="-75" y2="75"><stop offset="0" stop-color="#4f9c9c"/><stop offset=".25" stop-color="#52c8cc"/><stop offset=".5" stop-color="#5cffff"/><stop offset=".7" stop-color="#84ffff"/><stop offset=".88" stop-color="#5cffff"/><stop offset="1" stop-color="#58c0c8"/></linearGradient>
          <clipPath id="tc"><ellipse rx="81" ry="42.500"/></clipPath>
          <clipPath id="rc"><ellipse rx="54.500" ry="81"/></clipPath>
          <clipPath id="lc"><ellipse rx="42.500" ry="81"/></clipPath>
          <g id="pt" stroke="#223" stroke-width=".8"><g clip-path="url(#tc)"><ellipse rx="81" ry="42.500" fill="url(#tg)"/><ellipse cy="5.500" rx="75" ry="39.400" fill="url(#tw)"/><ellipse cy="20.800" rx="75" ry="39.400" fill="url(#tg)"/><ellipse cy="26" rx="69" ry="36.200" fill="#5cfcfd"/></g><ellipse rx="81" ry="42.500" fill="none"/></g>
          <g id="pr" stroke="#223" stroke-width=".7"><g transform="rotate(213.700)"><g clip-path="url(#rc)"><ellipse rx="54.500" ry="81" fill="url(#rg)"/><ellipse cx="4.800" rx="50.500" ry="75" fill="url(#rw)"/><ellipse cx="18.100" rx="50.500" ry="75" fill="url(#rg)"/><ellipse cx="22.500" rx="46.400" ry="69" fill="#49c3c4"/></g><ellipse rx="54.500" ry="81" fill="none"/></g></g>
          <g id="pl" stroke="#223" stroke-width=".7"><g transform="rotate(-22.400)"><g clip-path="url(#lc)"><ellipse rx="42.500" ry="81" fill="url(#lg)"/><ellipse cx="5.500" rx="39.400" ry="75" fill="url(#lw)"/><ellipse cx="20.800" rx="39.400" ry="75" fill="url(#lg)"/><ellipse cx="26" rx="36.200" ry="69" fill="#429b9b"/></g><ellipse rx="42.500" ry="81" fill="none"/></g></g>
          <linearGradient id="el" gradientUnits="userSpaceOnUse" x1="970" y1="537" x2="958" y2="555"><stop offset="0" stop-color="#42f63c"/><stop offset=".5" stop-color="#3ff03a"/><stop offset=".85" stop-color="#30a830"/><stop offset="1" stop-color="#2f9a30"/></linearGradient>
          <linearGradient id="er" gradientUnits="userSpaceOnUse" x1="1371" y1="564" x2="1379" y2="584"><stop offset="0" stop-color="#44f840"/><stop offset=".4" stop-color="#5aff58"/><stop offset=".7" stop-color="#3efc3a"/><stop offset="1" stop-color="#34c234"/></linearGradient>
          <linearGradient id="ev" gradientUnits="userSpaceOnUse" x1="1133.500" y1="0" x2="1154.500" y2="0"><stop offset="0" stop-color="#2f962f"/><stop offset=".3" stop-color="#3cc83a"/><stop offset=".65" stop-color="#31ac30"/><stop offset="1" stop-color="#38cc34"/></linearGradient>
        </defs>
        <text x="339" y="185" class="wm" textLength="450" lengthAdjust="spacingAndGlyphs">NX Student Edition - Not to be used for commercial purposes</text>
        <g class="die" stroke-linejoin="round">
          <path d="M1237 234.500Q1243 232.500 1249 234.500L1603 472Q1611 477 1610.500 489L1607.600 974Q1608 981 1603 985L1153 1167.500Q1143 1172 1132 1166L780 931.500Q775 927 775.700 920L778.500 434Q779 421 789 417.500z" fill="#46ee44" stroke="#3fae3f" stroke-width=".5"/>
          <path d="M780 931.500L777.500 923.500 1132 1161h21L1603.500 979v6L1153 1168Q1143 1172 1132 1166z" fill="#37a436"/>
          <path d="M778.500 434l-2.800 488 2.500 2L781 436z" fill="#37a436"/>
          <path d="M1242.800 235.700L1596.700 472.700 1146.300 655.700 793.600 419z" fill="#4444fe" stroke="#223"/>
          <path d="M781 435.700L1135.300 671.700 1132.500 1161 777.700 923.600z" fill="#303098" stroke="#223"/>
          <path d="M1155.700 674.300L1606 491.700 1603.200 979 1152.900 1161z" fill="#3333c3" stroke="#223"/>
          <path d="M793.600 419L1146.300 655.700Q1138 661 1135.300 671.700L781 435.700Q785 423 793.600 419z" fill="url(#el)" stroke="#234a23" stroke-width=".8"/>
          <path d="M1146.300 655.700L1596.700 472.700Q1605 479 1606 491.700L1155.700 674.300Q1155 661 1146.300 655.700z" fill="url(#er)" stroke="#234a23" stroke-width=".8"/>
          <path d="M1135.300 671.700Q1145 678.500 1155.700 674.300L1152.900 1161Q1143 1164.500 1132 1161z" fill="url(#ev)" stroke="#234a23" stroke-width=".8"/>
          <path d="M1146.300 655.700Q1138 660 1135.300 671.700 1145 679 1155.700 674.300 1155 661 1146.300 655.700z" fill="#42f23e" stroke="#234a23" stroke-width=".8"/>
          <path d="M1132 1161q-.5 4 2 6 9 4 17 0 2-2 2-6-10 4-21 0z" fill="#38a838" stroke="#234a23" stroke-width=".7"/>
          <use href="#pt" x="1220.200" y="333.800"/><use href="#pt" x="983.600" y="431.700"/><use href="#pt" x="1405.700" y="460"/><use href="#pt" x="1169.400" y="556"/>
          <use href="#pr" x="1273.500" y="716"/><use href="#pr" x="1272.300" y="870"/><use href="#pr" x="1271.600" y="1023.600"/><use href="#pr" x="1486.400" y="629.400"/><use href="#pr" x="1485.600" y="783.200"/><use href="#pr" x="1484.700" y="937"/>
          <use href="#pl" x="873.100" y="742.100"/><use href="#pl" x="1034.800" y="721.800"/><use href="#pl" x="1033.300" y="978.600"/>
        </g>
        <g class="triad">
          <path d="M410 1237l-8-1.500-7-8.500 11 2 .5 2 5 3z" fill="#0a46f0"/><path d="M394.500 1226.500l12.500 2-2 2.500 7 5-2 3-7-5-2 2z" fill="#0a46f0"/>
          <path d="M469 1240.500l14-5.500-1-2 14.500.500-9.500 9-1.500-3-15.500 7z" fill="#e23c3c"/><path d="M469 1244.500l16-6.500 2 2.500-1.500-1-15.500 6.500z" fill="#a82828"/>
          <path d="M437 1289h4.500v16h2l-5 14-4-14h2.500z" fill="#1f6a20"/>
          <path d="M409.500 1237.500L443 1223.500 469 1241 435.500 1254zM409.500 1237.500V1272.500L435.500 1290V1254M435.500 1290L469 1276.500V1241" fill="none" stroke="#aaa" stroke-width="1.200"/>
          <text x="384.500" y="1227" fill="#2a48e0">Z</text><text x="499.500" y="1235" fill="#d84040">X</text><text x="434" y="1331.500" fill="#289028">Y</text>
        </g>
      </svg>
    </section>
  </main>
  <footer class="status"></footer>
</div>
</body>
</html>
```
FILE: styles.css
```css
* { box-sizing: border-box; }
body { margin: 0; font: 12px/16px "Open Sans", "Noto Sans", sans-serif; color: #1a1a1a; background: #fff; }
.defs { position: absolute; }
svg { display: block; flex: none; }
.app { width: 2553px; height: 1385px; display: flex; flex-direction: column; overflow: hidden; }

.top { height: 52px; background: linear-gradient(90deg, #00648a, #0079a6); color: #fff; }
.titlebar { height: 27px; display: grid; grid-template-columns: 1353px auto 1fr; }
.quick { display: flex; height: 22px; }
.nx { width: 38px; padding-left: 1px; font: 800 20px/24px "Open Sans", sans-serif; letter-spacing: 0; }
.q { display: flex; align-items: center; justify-content: center; }
.sep { background: linear-gradient(#00506f, #00506f) 0 1px / 1px 19px no-repeat; }
.dim { color: #3d8aaa; }
.q-save { width: 32px; padding-left: 4px; }
.q-undo { width: 28px; padding-left: 1px; }
.q-c1 { width: 13px; }
.q-redo { width: 26px; padding-right: 2px; }
.q-cut { width: 26px; padding-left: 4px; }
.q-copy { width: 24px; }
.q-paste { width: 22px; }
.q-target { width: 26px; padding-right: 2px; }
.q-color { width: 31px; }
.q-c2 { width: 13px; padding-right: 5px; }
.q-mic, .q-hand { width: 29px; }
.q-wins { width: 27px; padding-left: 3px; }
.q-win { width: 22px; }
.q-text { width: 46px; letter-spacing: -.3px; }
.q-c3 { width: 13px; }
.q-more { width: 12px; }
.title { margin: 0; font-weight: 400; font-size: 12px; line-height: 22px; letter-spacing: -.2px; white-space: nowrap; }
.winctl { display: flex; justify-content: flex-end; padding: 4px 2px 0 0; }
.brand { font: 800 11.5px/17px "Open Sans", sans-serif; width: 88px; letter-spacing: .1px; }
.menubar { height: 25px; display: flex; justify-content: space-between; }
.tabs { display: flex; }
.tab { text-align: center; font-size: 12.500px; line-height: 23px; height: 23px; letter-spacing: -.3px; color: #e8f4f8; }
.active { color: #ffc845; border-bottom: 2px solid #ffc845; }
.t-file { width: 53px; margin-right: 8px; }
.t-home { width: 67px; }
.t-curve { width: 66px; }
.t-surface { width: 73px; }
.t-asm { width: 99px; }
.t-ana { width: 76px; }
.t-view { width: 61px; }
.t-disp { width: 72px; }
.t-sel { width: 86px; }
.t-tools { width: 62px; }
.t-app { width: 98px; }
.tools { display: flex; gap: 10px; padding: 1px 6px 0 0; }
.search { width: 160px; height: 20px; background: #fff; border: 1px solid #6b6b6b; color: #9a9a9a; display: flex; align-items: center; justify-content: space-between; padding: 0 1px 0 3px; font-size: 11px; letter-spacing: -.15px; }

.ribbon { height: 89px; background: #fff; border-bottom: 1px solid #dcdcdc; display: flex; position: relative; }
.group { height: 79px; margin-top: 5px; border-right: 1px solid #dcdcdc; display: flex; flex-direction: column; }
.g1 { width: 101px; padding-left: 6px; }
.g2 { width: 535px; padding-left: 8px; }
.g3 { width: 247px; padding-left: 6px; }
.items { display: flex; height: 69px; padding-top: 1px; }
.big { display: flex; flex-direction: column; align-items: center; text-align: center; line-height: 13px; white-space: nowrap; font-size: 11.500px; letter-spacing: -.2px; }
.big span { margin-top: 4px; }
.car { display: inline-block; vertical-align: 2px; margin-left: -1px; }
.w37 { width: 37px; } .w39 { width: 39px; } .w40 { width: 40px; } .w44 { width: 44px; } .w45 { width: 45px; }
.w46 { width: 46px; } .w47 { width: 47px; } .w51 { width: 51px; } .w52 { width: 52px; }
.small { display: flex; flex-direction: column; gap: 10px; margin-left: 8px; padding-top: 2px; }
.g3 .small { margin-left: 5px; }
.row { height: 24px; display: flex; align-items: center; gap: 4px; white-space: nowrap; font-size: 11.500px; letter-spacing: -.2px; }
.gname { display: flex; justify-content: center; align-items: center; color: #00648a; font-size: 11.500px; line-height: 14px; letter-spacing: -.15px; height: 12px; padding-top: 4px; position: relative; }
.g1 .gname { padding-right: 18px; }
.g2 .gname { padding-right: 23px; }
.g3 .gname { padding-right: 20px; }
.dd { position: absolute; right: 8px; top: 1px; color: #111; }
.ribmore { position: absolute; right: 2px; bottom: 9px; }

.main { flex: none; height: 1227px; display: flex; }
.rail { width: 34px; background: #dcdcdc; border-right: 1px solid #999; display: flex; flex-direction: column; }
.ri { height: 44px; display: flex; align-items: center; justify-content: center; }
.r1 { height: 27px; padding-right: 3px; }
.r2 { height: 49px; }
.on { background: #fff; width: 34px; height: 43px; border-top: 1px solid #999; border-bottom: 1px solid #999; }
.r4 { height: 44px; }
.r7 { height: 43px; }

.panel { width: 298px; border-right: 1px solid #a4a4a4; display: flex; flex-direction: column; padding: 0 9px 0 8px; }
.phead { height: 26px; display: flex; align-items: center; gap: 4px; margin: 0 2px 0 -2px; letter-spacing: -.3px; }
.phead span { margin-top: -1px; }
.max { margin-left: auto; }
.grid { height: 1093px; border: 1px solid #d4d4d4; display: flex; flex-direction: column; }
.hrow { display: flex; height: 19px; background: #f0f0f0; border-bottom: 1px solid #d4d4d4; flex: none; line-height: 20px; overflow: hidden; }
.hrow .cn { width: 200px; padding: 2px 0 0 6px; border-right: 1px solid #d4d4d4; gap: 17px; }
.hrow .cc, .hrow .cu { padding-top: 2px; border-right: 1px solid #d4d4d4; }
.hrow .cm { padding: 1px 0 0 6px; width: 31px; overflow: hidden; line-height: 18px; }
.cn { width: 200px; display: flex; align-items: center; letter-spacing: -.3px; }
.cc, .cu { width: 24px; display: flex; align-items: center; justify-content: center; }
.rows { flex: 1; overflow: hidden; position: relative;
  background: linear-gradient(#e6e6e6, #e6e6e6) 199px 0 / 1px 100% no-repeat, linear-gradient(#e6e6e6, #e6e6e6) 223px 0 / 1px 100% no-repeat, linear-gradient(#e6e6e6, #e6e6e6) 247px 0 / 1px 100% no-repeat,
  repeating-linear-gradient(#fff 0 19px, #e6e6e6 19px 20px, #f9f9f9 20px 39px, #e6e6e6 39px 40px); }
.guides { position: absolute; left: 0; top: 0; }
.trow { height: 20px; display: flex; align-items: center; }
.trow b { font-weight: 400; white-space: nowrap; margin-left: 3px; }
.l1 .cn { padding-left: 19px; }
.l2 .cn { padding-left: 38px; }
.off b { color: #9e9e9e; }
.cur b { font-weight: 700; letter-spacing: -.4px; }
.hscroll { height: 17px; background: #f0f0f0; padding: 8px 0 0 17px; }
.hscroll i { display: block; width: 194px; height: 2px; background: #868686; }
.splitter { height: 6px; margin: 2px 0 1px; border: 1px solid #a8a8a8; background: #dadada; }
.acc { height: 23px; border-bottom: 2px solid #d0d0d0; display: flex; align-items: center; color: #00648a; font-size: 13px; letter-spacing: -.25px; padding: 4px 0 0 10px; }
.acc i { border-left: 5px solid #00648a; border-top: 5px solid transparent; border-bottom: 5px solid transparent; margin-right: 8px; margin-top: -2px; }

.doc { flex: 1; min-width: 0; }
.dtabs { height: 26px; border-bottom: 2px solid #00608a; display: flex; }
.dtab { display: flex; align-items: center; letter-spacing: -.3px; white-space: nowrap; }
.d1 { width: 137px; padding-left: 6px; gap: 3px; }
.d2 { width: 89px; padding-left: 6px; gap: 5px; background: #00608a; color: #fff; }
.view { height: 1200px; }
.wm { font: 16px "Liberation Sans", Arial, sans-serif; fill: #f04038; }
.triad text { font: 13px "Liberation Sans", Arial, sans-serif; }
.status { flex: 1; border-top: 1px solid #999; background: #fff; }
```
